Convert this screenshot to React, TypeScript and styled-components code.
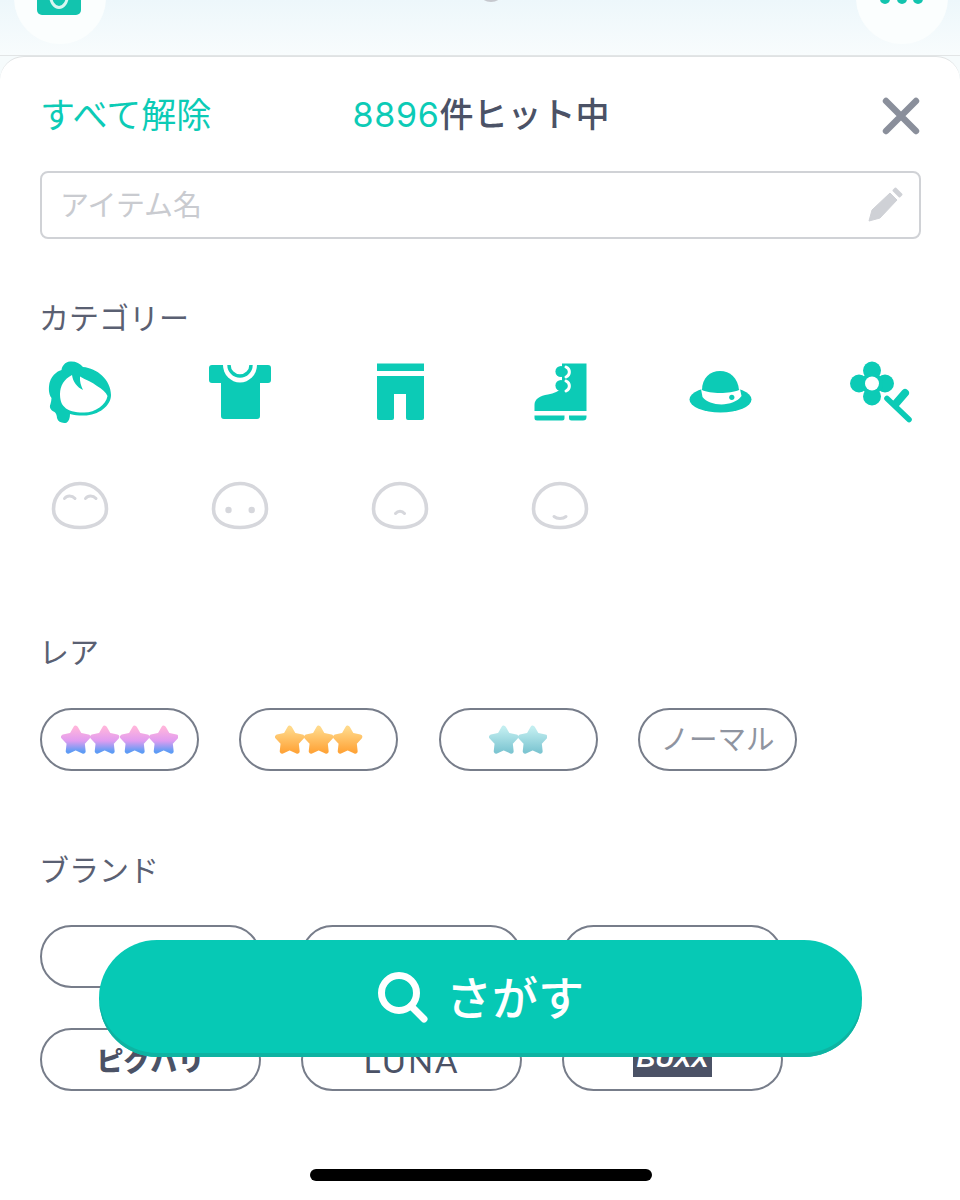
import styled, { createGlobalStyle } from 'styled-components';

const TEAL = '#0ccbb6';
const INK = '#4b5266';
const FONT = '"Noto Sans CJK JP", "Noto Sans", sans-serif';

const GlobalStyle = createGlobalStyle`
  html, body {
    margin: 0;
    padding: 0;
    background: #fff;
  }
  * {
    box-sizing: border-box;
  }
`;

const STAR_POINTS = '15,5 18.53,11.15 25.46,12.6 20.71,17.85 21.47,24.9 15,22 8.53,24.9 9.29,17.85 4.54,12.6 11.47,11.15';

type Rarity = 'rainbow' | 'gold' | 'silver';

const RARITIES: { id: Rarity; count: number }[] = [
  { id: 'rainbow', count: 4 },
  { id: 'gold', count: 3 },
  { id: 'silver', count: 2 },
];

const Stars = ({ id, count }: { id: Rarity; count: number }) => (
  <StarRow>
    {Array.from({ length: count }).map((_, i) => (
      <StarSvg key={i} viewBox="2.5 2.5 25 25">
        <polygon points={STAR_POINTS} fill={`url(#star-${id})`} stroke={`url(#star-${id})`} strokeWidth="4" strokeLinejoin="round" />
      </StarSvg>
    ))}
  </StarRow>
);

const HairIcon = () => (
  <IconSvg viewBox="0 0 64 64">
    <path
      fillRule="evenodd"
      d="M18.5 62.7C14 63.5 10 62 9 58C9 55.5 8 53 6.5 52C2.5 50.5 1 47 2.5 44C3 42 3.5 40 3.5 38C0.5 34 0.5 28 1.5 23C3 18 5 15 8 13C10 11 12 10.5 13.5 10C14 6 17 2 22 1.5C27 1 32 3 35 7C49 8 63 20 63 35C63 46 50 56 35 55.5C30 55.5 26 55 22 54C22 58 21 61 18.5 62.7Z M12 34C12 26 16 19 24 15C25 22 29 27 35 30C33 26 31.5 21 32 16.5C38 20 44 22 49 26C54 29 58 32 59.5 36C58 45 47 53 35 52.5C27 52.5 20 51 16.5 47C13 44 12 39 12 34Z"
    />
  </IconSvg>
);

const ShirtIcon = () => (
  <IconSvg viewBox="0 0 64 64">
    <path d="M4 5H60A3 3 0 0 1 63 8V20A3 3 0 0 1 60 23H52V56A3 3 0 0 1 49 59H16A3 3 0 0 1 13 56V23H4A3 3 0 0 1 1 20V8A3 3 0 0 1 4 5Z" />
    <path d="M15 5A17 17.5 0 0 0 49 5Z" fill="#fff" />
    <path d="M21 5A11 11 0 0 0 43 5" fill="none" stroke={TEAL} strokeWidth="3.4" />
  </IconSvg>
);

const PantsIcon = () => (
  <IconSvg viewBox="0 0 64 64">
    <path d="M9 3.5H56V11H9Z" />
    <path d="M9 16H56V58A2 2 0 0 1 54 60H40A2 2 0 0 1 38 58V34H26V58A2 2 0 0 1 24 60H11A2 2 0 0 1 9 58Z" />
  </IconSvg>
);

const BootIcon = () => (
  <IconSvg viewBox="0 0 64 64">
    <path d="M34 3.5H58.5V51H6.5V45C6.5 39 12 35.5 20 34.5C26 33.5 31 31 34 28Z" />
    <circle cx="33" cy="11.5" r="5.6" />
    <circle cx="33" cy="25.5" r="5.6" />
    <path d="M38 7C42.5 9 42.5 15 38 17M38 21C42.5 23 42.5 29 38 31" fill="none" stroke="#fff" strokeWidth="3" strokeLinecap="round" />
    <path d="M6.5 55.5H36.5V58A2.4 2.4 0 0 1 34 60.5H9A2.5 2.5 0 0 1 6.5 58Z" />
    <path d="M41 55.5H58.5V57A3.5 3.5 0 0 1 55 60.5H43.5A2.5 2.5 0 0 1 41 58Z" />
  </IconSvg>
);

const HatIcon = () => (
  <IconSvg viewBox="0 0 64 64">
    <ellipse cx="32.5" cy="39.5" rx="31" ry="13" />
    <path d="M13 29C22 33 42 33 52 29L53.5 36C46 47 22 47 14.5 37Z" fill="#fff" />
    <path d="M14 30C14 18 22 11 32 11C42 11 50 18 51 30C42 34 22 34 14 30Z" />
    <circle cx="43.8" cy="37.3" r="2.6" />
  </IconSvg>
);

const FlowerIcon = () => (
  <IconSvg viewBox="0 0 64 64">
    <circle cx="24" cy="10.5" r="9" />
    <circle cx="24" cy="36.5" r="9" />
    <circle cx="11" cy="23.5" r="9" />
    <circle cx="37" cy="23.5" r="9" />
    <circle cx="24" cy="23.5" r="11" />
    <circle cx="24" cy="23.5" r="7" fill="#fff" />
    <path d="M39 38.5L61 59.5" fill="none" stroke={TEAL} strokeWidth="5.6" strokeLinecap="round" />
    <path d="M47.5 44L57 33" fill="none" stroke={TEAL} strokeWidth="8" strokeLinecap="round" />
  </IconSvg>
);

const FACE_OUTLINE = 'M32 9.5C47 9.5 58.5 21 58.5 35C58.5 47 47 53.5 32 53.5C17 53.5 5.5 47 5.5 35C5.5 21 17 9.5 32 9.5Z';

const FaceIcon = ({ children }: { children: React.ReactNode }) => (
  <FaceSvg viewBox="0 0 64 64">
    <path d={FACE_OUTLINE} strokeWidth="3.6" />
    {children}
  </FaceSvg>
);

const CATEGORY_ICONS = [
  <HairIcon key="hair" />,
  <ShirtIcon key="shirt" />,
  <PantsIcon key="pants" />,
  <BootIcon key="boot" />,
  <HatIcon key="hat" />,
  <FlowerIcon key="flower" />,
  <FaceIcon key="eyes">
    <path d="M16.5 24.5C19 21 24 21 27 24.5M37.5 24.5C40 21 45 21 48 24.5" strokeWidth="3" strokeLinecap="round" />
  </FaceIcon>,
  <FaceIcon key="dots">
    <circle cx="20.5" cy="36" r="3.2" fill="#d6d7dc" stroke="none" />
    <circle cx="43.7" cy="36" r="3.2" fill="#d6d7dc" stroke="none" />
  </FaceIcon>,
  <FaceIcon key="nose">
    <path d="M27.5 39.5C30 36.5 34 36.5 36.5 39.5" strokeWidth="3" strokeLinecap="round" />
  </FaceIcon>,
  <FaceIcon key="mouth">
    <path d="M26 42.5C29 45 35 45 38 42.5" strokeWidth="3" strokeLinecap="round" />
  </FaceIcon>,
];

const App = () => {
  return (
    <>
      <GlobalStyle />
      <Page>
        <GradientDefs width="0" height="0">
          <defs>
            <linearGradient id="star-rainbow" x1="0" y1="0" x2="0" y2="1">
              <stop offset="0" stopColor="#ffb4dc" />
              <stop offset="0.55" stopColor="#e09cf0" />
              <stop offset="1" stopColor="#5f9cf5" />
            </linearGradient>
            <linearGradient id="star-gold" x1="0" y1="0" x2="0" y2="1">
              <stop offset="0" stopColor="#ffd98a" />
              <stop offset="1" stopColor="#ffa53a" />
            </linearGradient>
            <linearGradient id="star-silver" x1="0" y1="0" x2="0" y2="1">
              <stop offset="0" stopColor="#c2eef0" />
              <stop offset="1" stopColor="#7ec6d2" />
            </linearGradient>
          </defs>
        </GradientDefs>

        <TopBar>
          <TopCircle>
            <BagBadge>
              <BagRing />
            </BagBadge>
          </TopCircle>
          <CenterKnob />
          <TopCircle>
            <MoreDots>
              <i />
              <i />
              <i />
            </MoreDots>
          </TopCircle>
        </TopBar>

        <Sheet>
          <Header>
            <ClearAll>すべて解除</ClearAll>
            <HitCount>
              <HitNumber>8896</HitNumber>件ヒット中
            </HitCount>
            <CloseButton>
              <svg width="38" height="38" viewBox="0 0 38 38">
                <path d="M4 4L34 34M34 4L4 34" stroke="#8a8f9b" strokeWidth="6.4" strokeLinecap="round" />
              </svg>
            </CloseButton>
          </Header>

          <SearchBox>
            <Placeholder>アイテム名</Placeholder>
            <svg width="36" height="36" viewBox="0 0 36 36">
              <path d="M2 34L5 23L23 6L30 13L13 31Z" fill="#cfd1d6" stroke="#cfd1d6" strokeLinejoin="round" />
              <path d="M26.5 3.5L28.5 1.5L34.5 7.5L32.5 9.5Z" fill="#cfd1d6" stroke="#cfd1d6" strokeWidth="2" strokeLinejoin="round" />
            </svg>
          </SearchBox>

          <Label $gap={59}>カテゴリー</Label>
          <IconGrid>
            {CATEGORY_ICONS.map((icon) => (
              <IconCell key={icon.key}>{icon}</IconCell>
            ))}
          </IconGrid>

          <Label $gap={94}>レア</Label>
          <RarityRow>
            {RARITIES.map((r) => (
              <RarityPill key={r.id}>
                <Stars id={r.id} count={r.count} />
              </RarityPill>
            ))}
            <RarityPill>
              <NormalText>ノーマル</NormalText>
            </RarityPill>
          </RarityRow>

          <Label $gap={79}>ブランド</Label>
          <BrandGrid>
            <BrandPill />
            <BrandPill />
            <BrandPill />
            <BrandPill>
              <PiggLogo>ピグパリ</PiggLogo>
            </BrandPill>
            <BrandPill>
              <LunaLogo>LUNA</LunaLogo>
            </BrandPill>
            <BrandPill>
              <BuxxLogo>BUXX</BuxxLogo>
            </BrandPill>
          </BrandGrid>
        </Sheet>

        <SearchButton>
          <svg width="52" height="52" viewBox="0 0 52 52">
            <circle cx="22" cy="22" r="17.5" fill="none" stroke="#fff" strokeWidth="7" />
            <path d="M34 35L47 48" stroke="#fff" strokeWidth="7" strokeLinecap="round" />
          </svg>
          <SearchLabel>さがす</SearchLabel>
        </SearchButton>
        <HomeIndicator />
      </Page>
    </>
  );
};
export default App;

const Page = styled.div`
  position: relative;
  width: 960px;
  height: 1200px;
  overflow: hidden;
  font-family: ${FONT};
  color: ${INK};
  background: #f6fbfc;
`;
const GradientDefs = styled.svg`
  position: absolute;
`;
const TopBar = styled.div`
  display: flex;
  justify-content: space-between;
  align-items: flex-end;
  height: 56px;
  padding: 0 12px 11px 14px;
  background: linear-gradient(180deg, #edf7fb, #f8fcfd);
  border-bottom: 1px solid #e2e5e6;
`;
const TopCircle = styled.div`
  position: relative;
  flex: none;
  width: 92px;
  height: 92px;
  border-radius: 50%;
  background: #fbfefe;
`;
const BagBadge = styled.div`
  position: absolute;
  left: 23px;
  bottom: 29px;
  width: 44px;
  height: 40px;
  border-radius: 5px;
  background: #12c4ae;
`;
const BagRing = styled.div`
  position: absolute;
  left: 12px;
  bottom: 6px;
  width: 20px;
  height: 28px;
  border: 3px solid #d9f6f1;
  border-radius: 50%;
`;
const MoreDots = styled.div`
  position: absolute;
  left: 24px;
  bottom: 40px;
  display: flex;
  gap: 6.5px;
  i {
    width: 10px;
    height: 10px;
    border-radius: 50%;
    background: #12c4ae;
  }
`;
const CenterKnob = styled.div`
  flex: none;
  align-self: flex-start;
  width: 28px;
  height: 28px;
  margin-top: -26px;
  margin-left: 20px;
  border-radius: 50%;
  background: #c6c8ce;
`;
const Sheet = styled.div`
  height: 1144px;
  padding-top: 28px;
  background: #fff;
  border-radius: 24px 24px 0 0;
  border-top: 1px solid #dfe2e3;
`;
const Header = styled.div`
  display: grid;
  grid-template-columns: 1fr auto 1fr;
  align-items: start;
  height: 60px;
  padding: 0 40px;
  font-size: 35px;
`;
const ClearAll = styled.span`
  color: ${TEAL};
  line-height: 56px;
  white-space: nowrap;
`;
const HitCount = styled.span`
  margin-left: 2px;
  font-size: 34px;
  font-weight: 500;
  line-height: 56px;
  white-space: nowrap;
`;
const HitNumber = styled.span`
  font-family: 'Inter', sans-serif;
  font-weight: 400;
  color: ${TEAL};
  letter-spacing: 0.7px;
`;
const CloseButton = styled.div`
  display: flex;
  justify-content: flex-end;
  padding-top: 12px;
`;
const SearchBox = styled.div`
  display: flex;
  align-items: center;
  justify-content: space-between;
  height: 68px;
  margin: 26px 39px 0 40px;
  padding: 0 16px 0 18px;
  border: 2px solid #d0d2d6;
  border-radius: 8px;
`;
const Placeholder = styled.span`
  padding-bottom: 5px;
  font-size: 29px;
  color: #c9cbd0;
`;
const Label = styled.div<{ $gap: number }>`
  height: 40px;
  margin-top: ${({ $gap }) => $gap}px;
  padding-left: 39px;
  font-size: 30px;
  line-height: 36px;
  color: #5a6072;
`;
const IconGrid = styled.div`
  display: grid;
  grid-template-columns: repeat(6, 160px);
  grid-auto-rows: 64px;
  row-gap: 50px;
  margin-top: 22px;
`;
const IconCell = styled.div`
  display: flex;
  justify-content: center;
`;
const IconSvg = styled.svg`
  width: 64px;
  height: 64px;
  fill: ${TEAL};
`;
const FaceSvg = styled.svg`
  width: 64px;
  height: 64px;
  fill: none;
  stroke: #d6d7dc;
`;
const RarityRow = styled.div`
  display: flex;
  gap: 40.3px;
  margin-top: 36px;
  padding-left: 40px;
`;
const RarityPill = styled.div`
  display: flex;
  align-items: center;
  justify-content: center;
  width: 159px;
  height: 63px;
  border: 2px solid #777d8a;
  border-radius: 32px;
  white-space: nowrap;
`;
const NormalText = styled.span`
  padding-bottom: 4px;
  font-size: 28.5px;
  color: #8f94a0;
`;
const StarRow = styled.div`
  display: flex;
`;
const StarSvg = styled.svg`
  width: 29.4px;
  height: 29.4px;
`;
const BrandGrid = styled.div`
  display: grid;
  grid-template-columns: repeat(3, 221px);
  grid-auto-rows: 63px;
  column-gap: 40px;
  row-gap: 40px;
  margin-top: 35px;
  padding-left: 40px;
`;
const BrandPill = styled.div`
  display: flex;
  align-items: center;
  justify-content: center;
  border: 2px solid #777d8a;
  border-radius: 32px;
  overflow: hidden;
`;
const PiggLogo = styled.span`
  font-size: 27px;
  font-weight: 900;
  color: ${INK};
  white-space: nowrap;
`;
const LunaLogo = styled.span`
  font-family: 'Lato', sans-serif;
  font-size: 33px;
  letter-spacing: 2px;
  color: ${INK};
`;
const BuxxLogo = styled.span`
  display: block;
  width: 79px;
  height: 36px;
  margin-top: -2px;
  background: ${INK};
  color: #fff;
  font-family: 'Liberation Sans', sans-serif;
  font-size: 26px;
  font-style: italic;
  font-weight: 700;
  line-height: 35px;
  text-align: center;
`;
const SearchButton = styled.div`
  position: absolute;
  left: 99px;
  top: 940px;
  display: flex;
  align-items: center;
  justify-content: center;
  gap: 17px;
  width: 763px;
  height: 117px;
  padding-bottom: 4px;
  border-radius: 58px;
  background: #06c9b5;
  box-shadow: inset 0 -4px 0 #0eb3a2;
  color: #fff;
`;
const SearchLabel = styled.span`
  padding-bottom: 4px;
  font-size: 46px;
  font-weight: 500;
`;
const HomeIndicator = styled.div`
  position: absolute;
  left: 310px;
  top: 1169px;
  width: 342px;
  height: 12px;
  border-radius: 6px;
  background: #000;
`;
